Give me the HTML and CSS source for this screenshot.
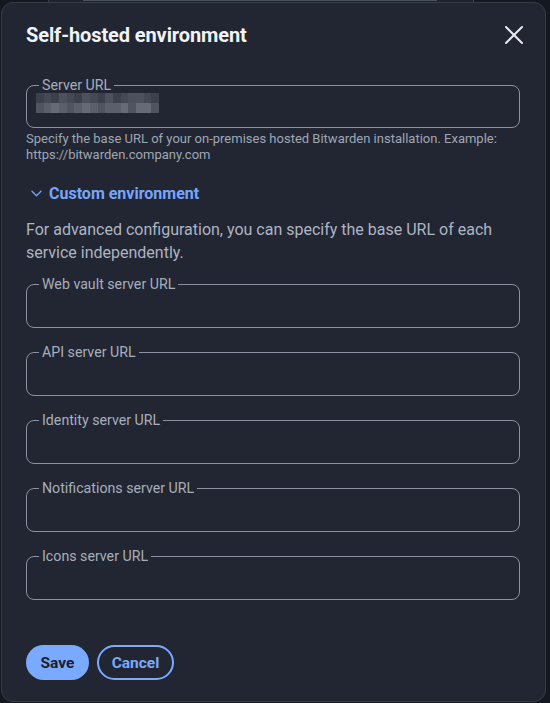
FILE: index.html
```html
<!DOCTYPE html>
<html>
<head>
<meta charset="utf-8">
<link rel="stylesheet" href="styles.css">
</head>
<body>
<div class="backdrop-strip"><span class="strip-a"></span><span class="strip-b"></span></div>
<div class="dialog">
  <div class="header">
    <h1 class="title">Self-hosted environment</h1>
    <button class="close" aria-label="Close">
      <svg width="20" height="20" viewBox="0 0 20 20"><path d="M2 2 L18 18 M18 2 L2 18" stroke="#e8eaef" stroke-width="2" stroke-linecap="round" fill="none"/></svg>
    </button>
  </div>

  <fieldset class="field server">
    <legend>Server URL</legend>
    <div class="mosaic">
      <div class="mrow top">
        <i class="a"></i><i class="b"></i><i class="a"></i><i class="c"></i><i class="b"></i><i class="a"></i><i class="c"></i><i class="b"></i><i class="a"></i><i class="c"></i><i class="a"></i><i class="b"></i><i class="c"></i><i class="c"></i><i class="b"></i><i class="a"></i>
      </div>
      <div class="mrow bot">
        <i class="d"></i><i class="e"></i><i class="f"></i><i class="e"></i><i class="d"></i><i class="e"></i><i class="f"></i><i class="e"></i><i class="d"></i><i class="e"></i><i class="e"></i><i class="f"></i><i class="d"></i><i class="f"></i><i class="f"></i><i class="d"></i>
      </div>
    </div>
  </fieldset>
  <p class="hint">Specify the base URL of your on-premises hosted Bitwarden installation. Example: https://bitwarden.company.com</p>

  <button class="toggle">
    <svg width="11" height="7" viewBox="0 0 11 7"><path d="M1 1.2 L5.5 5.7 L10 1.2" stroke="#74a6ff" stroke-width="1.3" fill="none" stroke-linecap="round" stroke-linejoin="round"/></svg>
    <span>Custom environment</span>
  </button>

  <p class="intro">For advanced configuration, you can specify the base URL of each service independently.</p>

  <div class="fields">
    <fieldset class="field"><legend>Web vault server URL</legend><div class="empty"></div></fieldset>
    <fieldset class="field"><legend>API server URL</legend><div class="empty"></div></fieldset>
    <fieldset class="field"><legend>Identity server URL</legend><div class="empty"></div></fieldset>
    <fieldset class="field"><legend>Notifications server URL</legend><div class="empty"></div></fieldset>
    <fieldset class="field"><legend>Icons server URL</legend><div class="empty"></div></fieldset>
  </div>

  <div class="actions">
    <button class="btn primary">Save</button>
    <button class="btn outline">Cancel</button>
  </div>
</div>
</body>
</html>
```
FILE: styles.css
```css
html, body {
  margin: 0;
  padding: 0;
  background: #141821;
  width: 550px;
  height: 703px;
  overflow: hidden;
  font-family: Roboto, "Liberation Sans", sans-serif;
}
.backdrop-strip {
  position: absolute;
  top: 0;
  left: 0;
  width: 550px;
  height: 3px;
}
.strip-a {
  position: absolute;
  left: 48px;
  top: 0;
  width: 424px;
  height: 3px;
  background: #1e232d;
  border-left: 1px solid #3a404d;
  border-right: 1px solid #3a404d;
}
.strip-b {
  position: absolute;
  left: 83px;
  top: 0;
  width: 354px;
  height: 1px;
  background: #4a505c;
}
.dialog {
  position: relative;
  margin: 2px 0 0 1px;
  width: 545px;
  height: 700px;
  box-sizing: border-box;
  background: #222632;
  border: 1px solid #363b48;
  border-radius: 12px;
  padding: 0 25px 0 24px;
}
.header {
  display: flex;
  align-items: center;
  justify-content: space-between;
  padding-top: 20px;
  height: 24px;
}
.title {
  margin: 0;
  font-size: 20px;
  line-height: 24px;
  font-weight: 700;
  color: #f1f3f6;
  letter-spacing: -0.1px;
}
.close {
  background: none;
  border: 0;
  padding: 0;
  width: 20px;
  height: 20px;
  margin-right: -4px;
  margin-top: 0px;
  display: flex;
}
.field {
  margin: 0;
  padding: 0 9px;
  border: 1px solid #8b91a0;
  border-radius: 8px;
  min-width: 0;
}
.field legend {
  padding: 0 3px;
  margin-left: 3px;
  font-size: 14.2px;
  line-height: 16px;
  color: #a7aebc;
}
.server {
  margin-top: 30px;
}
.mosaic {
  height: 34px;
  padding-top: 0;
  display: flex;
  flex-direction: column;
}
.mrow {
  display: flex;
  height: 10px;
}
.mrow i {
  display: block;
  width: 7.7px;
  height: 10px;
}
.mrow .a { background: #3b404c; }
.mrow .b { background: #444955; }
.mrow .c { background: #4c515d; }
.mrow .d { background: #4f5461; }
.mrow .e { background: #5a5f6b; }
.mrow .f { background: #656a76; }
.hint {
  margin: 3px 0 0;
  font-size: 13px;
  line-height: 16px;
  color: #9ea6b4;
}
.toggle {
  margin-top: 20px;
  display: flex;
  align-items: center;
  gap: 7px;
  background: none;
  border: 0;
  padding: 0 0 0 5px;
  height: 20px;
  font-family: inherit;
  font-size: 16px;
  font-weight: 700;
  color: #74a6ff;
}
.intro {
  margin: 15px 0 0;
  font-size: 16px;
  line-height: 23px;
  color: #adb4c2;
}
.fields {
  margin-top: 12px;
  display: flex;
  flex-direction: column;
  gap: 16px;
}
.empty {
  height: 35px;
}
.actions {
  margin-top: 45px;
  display: flex;
  gap: 8px;
}
.btn {
  height: 35px;
  border-radius: 18px;
  font-family: inherit;
  font-size: 15.5px;
  font-weight: 700;
  padding: 0;
  box-sizing: border-box;
}
.primary {
  width: 63px;
  background: #7aaaff;
  border: 0;
  color: #1b2029;
}
.outline {
  width: 77px;
  background: transparent;
  border: 2px solid #7aaaff;
  color: #7aaaff;
}
```
